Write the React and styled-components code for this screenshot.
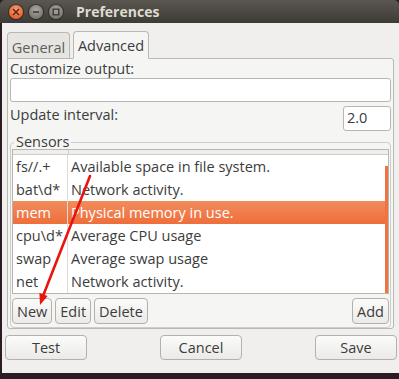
import React from 'react';
import styled, { createGlobalStyle } from 'styled-components';

const GlobalStyle = createGlobalStyle`
  html, body {
    margin: 0;
    padding: 0;
    background: #2b1b25;
  }
  body {
    font-family: 'Open Sans', 'DejaVu Sans', sans-serif;
    color: #3c3c3c;
  }
`;

const sensors = [
  { name: 'fs//.+', desc: 'Available space in file system.' },
  { name: 'bat\\d*', desc: 'Network activity.' },
  { name: 'mem', desc: 'Physical memory in use.', selected: true },
  { name: 'cpu\\d*', desc: 'Average CPU usage' },
  { name: 'swap', desc: 'Average swap usage' },
  { name: 'net', desc: 'Network activity.' },
];

const App = () => {
  return (
    <Desktop>
      <GlobalStyle />
      <Window>
        <TitleBar>
          <WinButton close>
            <svg width="8" height="8" viewBox="0 0 8 8">
              <path d="M1 1 L7 7 M7 1 L1 7" stroke="#5a2a14" strokeWidth="1.6" />
            </svg>
          </WinButton>
          <WinButton>
            <svg width="8" height="8" viewBox="0 0 8 8">
              <path d="M1 4 H7" stroke="#3a3935" strokeWidth="1.6" />
            </svg>
          </WinButton>
          <WinButton>
            <svg width="8" height="8" viewBox="0 0 8 8">
              <rect x="1.2" y="1.2" width="5.6" height="5.6" fill="none" stroke="#3a3935" strokeWidth="1.4" />
            </svg>
          </WinButton>
          <Title>Preferences</Title>
        </TitleBar>

        <Body>
          <Tabs>
            <Tab width={63}>General</Tab>
            <Tab width={76} active>Advanced</Tab>
          </Tabs>

          <Page>
            <Label>Customize output:</Label>
            <Entry />
            <IntervalRow>
              <Label>Update interval:</Label>
              <SpinEntry>2.0</SpinEntry>
            </IntervalRow>

            <Frame>
              <FrameLabel>Sensors</FrameLabel>
              <Tree>
                <TreeHeader>
                  <HeaderCell first />
                  <HeaderCell />
                </TreeHeader>
                {sensors.map((s) => (
                  <Row key={s.name} selected={s.selected}>
                    <NameCell>{s.name}</NameCell>
                    <DescCell>{s.desc}</DescCell>
                  </Row>
                ))}
                <Scrollbar />
              </Tree>
              <ButtonRow>
                <SmallButton>New</SmallButton>
                <SmallButton>Edit</SmallButton>
                <SmallButton>Delete</SmallButton>
                <Spacer />
                <SmallButton>Add</SmallButton>
              </ButtonRow>
            </Frame>
          </Page>

          <DialogButtons>
            <Button>Test</Button>
            <Button>Cancel</Button>
            <Button>Save</Button>
          </DialogButtons>
        </Body>

        <Arrow width="399" height="379" viewBox="0 0 399 379">
          <line x1="90" y1="176" x2="43" y2="296" stroke="#e8150f" strokeWidth="2.6" strokeLinecap="round" />
          <polygon points="40,305 47.6,296 39.4,293" fill="#e8150f" />
        </Arrow>
      </Window>
    </Desktop>
  );
};

const Desktop = styled.div`
  width: 399px;
  height: 379px;
  overflow: hidden;
`;

const Window = styled.div`
  position: relative;
  width: 399px;
  height: 373px;
  display: flex;
  flex-direction: column;
`;

const TitleBar = styled.div`
  height: 23px;
  display: flex;
  align-items: center;
  padding-left: 9px;
  gap: 6px;
  background: linear-gradient(#5b5750, #3d3b36);
  border-radius: 5px 5px 0 0;
`;

const WinButton = styled.div`
  width: 14px;
  height: 14px;
  border-radius: 50%;
  display: flex;
  align-items: center;
  justify-content: center;
  background: ${({ close }) =>
    close
      ? 'radial-gradient(circle at 50% 35%, #f7a07a, #e9612d 70%)'
      : 'radial-gradient(circle at 50% 35%, #a9a79f, #7b7973 70%)'};
  box-shadow: 0 0 0 1px rgba(0, 0, 0, 0.35);
`;

const Title = styled.div`
  margin-left: 7px;
  font-family: 'Open Sans', sans-serif;
  font-weight: 700;
  font-size: 14px;
  color: #dfdbd2;
`;

const Body = styled.div`
  flex: 1;
  margin-left: 2px;
  background: #f0efed;
  padding: 7px 2px 0 5px;
  display: flex;
  flex-direction: column;
`;

const Tabs = styled.div`
  display: flex;
  align-items: flex-end;
  gap: 3px;
  height: 28px;
  position: relative;
  z-index: 1;
`;

const Tab = styled.div`
  width: ${({ width }) => width}px;
  height: ${({ active }) => (active ? '28px' : '26px')};
  box-sizing: border-box;
  display: flex;
  align-items: center;
  justify-content: center;
  font-size: 14.5px;
  color: ${({ active }) => (active ? '#3c3c3c' : '#5d5d5b')};
  background: ${({ active }) => (active ? '#f5f5f4' : '#e6e5e2')};
  border: 1px solid #bab8b3;
  border-bottom: ${({ active }) => (active ? '1px solid #f5f5f4' : 'none')};
  border-radius: 4px 4px 0 0;
  margin-bottom: ${({ active }) => (active ? '-1px' : '0')};
  padding-top: ${({ active }) => (active ? '0' : '3px')};
`;

const Page = styled.div`
  width: 387px;
  height: 271px;
  box-sizing: border-box;
  background: #f5f5f4;
  border: 1px solid #bab8b3;
  border-radius: 0 3px 3px 3px;
  padding: 0 2px 0 2px;
  display: flex;
  flex-direction: column;
`;

const Label = styled.div`
  font-size: 14.5px;
  line-height: 19px;
  color: #3c3c3c;
`;

const Entry = styled.div`
  height: 24px;
  box-sizing: border-box;
  background: #fff;
  border: 1px solid #b8b6b1;
  border-radius: 3px;
`;

const IntervalRow = styled.div`
  display: flex;
  justify-content: space-between;
  align-items: flex-start;
  margin-top: 3px;
`;

const SpinEntry = styled.div`
  width: 48px;
  height: 25px;
  margin-top: 1px;
  box-sizing: border-box;
  background: #fff;
  border: 1px solid #b8b6b1;
  border-radius: 3px;
  font-size: 14.5px;
  line-height: 22px;
  padding-left: 3px;
  color: #3c3c3c;
`;

const Frame = styled.div`
  position: relative;
  margin-top: 11px;
  border: 1px solid #cfcdc9;
  border-radius: 4px;
  padding: 6px 1px 3px 1px;
  display: flex;
  flex-direction: column;
`;

const FrameLabel = styled.div`
  position: absolute;
  top: -10px;
  left: 3px;
  padding: 0 2px;
  background: #f5f5f4;
  font-size: 14.5px;
  line-height: 18px;
  color: #3c3c3c;
`;

const Tree = styled.div`
  position: relative;
  height: 145px;
  box-sizing: border-box;
  background: #fff;
  border: 1px solid #b8b6b1;
  overflow: hidden;
`;

const TreeHeader = styled.div`
  display: flex;
  height: 4px;
  background: #efeeec;
  border-bottom: 1px solid #cfcdc9;
`;

const HeaderCell = styled.div`
  width: ${({ first }) => (first ? '55px' : 'auto')};
  flex: ${({ first }) => (first ? 'none' : '1')};
  border-right: ${({ first }) => (first ? '1px solid #cfcdc9' : 'none')};
`;

const Row = styled.div`
  display: flex;
  height: 23px;
  align-items: center;
  font-size: 14.5px;
  color: ${({ selected }) => (selected ? '#fff' : '#3c3c3c')};
  background: ${({ selected }) =>
    selected ? 'linear-gradient(#f28c5c, #ee6e3b)' : 'transparent'};
`;

const NameCell = styled.div`
  width: 55px;
  height: 100%;
  display: flex;
  align-items: center;
  padding-left: 3px;
  box-sizing: border-box;
  border-right: 1px solid #dedddb;
`;

const DescCell = styled.div`
  flex: 1;
  padding-left: 3px;
  white-space: nowrap;
`;

const Scrollbar = styled.div`
  position: absolute;
  right: 0;
  top: 16px;
  bottom: 0;
  width: 3px;
  background: #ef7341;
`;

const ButtonRow = styled.div`
  display: flex;
  gap: 3px;
  margin-top: 4px;
`;

const Spacer = styled.div`
  flex: 1;
`;

const buttonBase = `
  box-sizing: border-box;
  border: 1px solid #b3b1ac;
  border-radius: 4px;
  background: linear-gradient(#fbfbfa, #ebeae8);
  color: #3c3c3c;
  font-family: 'Open Sans', sans-serif;
  font-size: 14.5px;
  display: flex;
  align-items: center;
  justify-content: center;
`;

const SmallButton = styled.div`
  ${buttonBase}
  height: 26px;
  padding: 0 4px;
`;

const DialogButtons = styled.div`
  display: flex;
  justify-content: space-between;
  margin-top: 6px;
  margin-left: -2px;
`;

const Button = styled.div`
  ${buttonBase}
  width: 82px;
  height: 25px;
`;

const Arrow = styled.svg`
  position: absolute;
  left: 0;
  top: 0;
  pointer-events: none;
`;

export default App;
